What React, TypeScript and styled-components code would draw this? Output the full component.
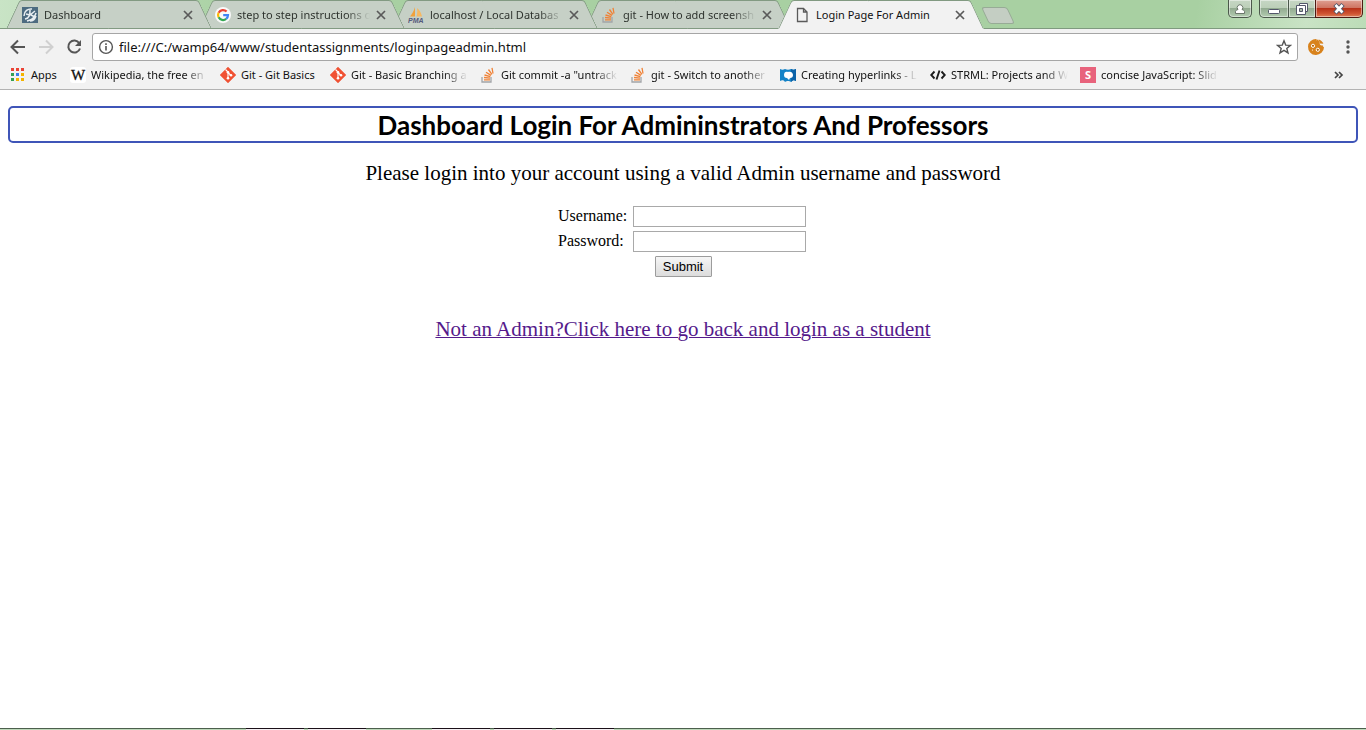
import React from 'react';
import styled, { createGlobalStyle, css } from 'styled-components';

const GlobalStyle = createGlobalStyle`
  *, *::before, *::after { box-sizing: border-box; }
  body { margin: 0; background: #fff; }
  button, input { font: inherit; }
`;

const UI_FONT = "'Segoe UI', 'Noto Sans', sans-serif";

/* ---------- window frame ---------- */

const BrowserWindow = styled.div`
  display: flex;
  flex-direction: column;
  min-height: 100vh;
  overflow: hidden;
  font-family: ${UI_FONT};
  color: #222;
`;

const TitleBar = styled.header`
  display: flex;
  align-items: flex-start;
  height: 29px;
  padding: 0 3px 0 6px;
  background:
    linear-gradient(#7f9a7f, #7f9a7f) left bottom / 100% 1px no-repeat,
    linear-gradient(100deg, #c9e4c6 0, #a8d0a2 240px, #a8d0a2 calc(100% - 170px), #c9e3c5 calc(100% - 60px), #bcdcb7 100%);
`;

const TabList = styled.nav`
  display: flex;
  flex: 0 1 965px;
  min-width: 0;
`;

const Tab = styled.div<{ $active?: boolean; $order: number }>`
  position: relative;
  isolation: isolate;
  z-index: ${p => (p.$active ? 10 : 9 - p.$order)};
  display: flex;
  align-items: center;
  flex: 0 1 205px;
  min-width: 0;
  height: 29px;
  margin-right: -12px;
  padding: 1px 18px 0 16px;

  &::before,
  &::after {
    content: '';
    position: absolute;
    z-index: -1;
    top: 0;
    bottom: 0;
    background: ${p => (p.$active ? '#f2f2f2' : '#c6d0c6')};
    border: 1px solid #829a82;
    transform-origin: bottom;
    ${p => p.$active && css`border-bottom-color: #f2f2f2;`}
  }
  &::before {
    left: 0;
    right: 50%;
    border-right: 0;
    border-top-left-radius: 3px;
    transform: skewX(-25deg);
  }
  &::after {
    left: 50%;
    right: 0;
    border-left: 0;
    border-top-right-radius: 3px;
    transform: skewX(25deg);
  }
`;

const PlainButton = styled.button`
  display: flex;
  align-items: center;
  justify-content: center;
  flex: none;
  padding: 0;
  border: 0;
  background: none;
  color: #5a5a5a;
`;

const TabTitle = styled(PlainButton)<{ $active?: boolean }>`
  flex: 1;
  justify-content: flex-start;
  gap: 6px;
  min-width: 0;
  font-size: 11px;
  line-height: 16px;
  color: ${p => (p.$active ? '#111' : '#2e332e')};
`;

const FadedText = styled.span<{ $width?: number }>`
  flex: ${p => (p.$width ? `0 0 ${p.$width}px` : '1')};
  min-width: 0;
  overflow: hidden;
  white-space: nowrap;
  text-align: left;
  mask-image: linear-gradient(to right, #000 calc(100% - 24px), transparent);
`;

const SolidText = styled(FadedText)`
  mask-image: none;
  overflow: visible;
`;

const CloseButton = styled(PlainButton)`
  width: 10px;
  height: 10px;
  margin-left: 6px;
`;

const NewTabButton = styled.button`
  flex: none;
  width: 26px;
  height: 17px;
  margin: 7px 0 0 14px;
  padding: 0;
  border: 1px solid #97ab96;
  border-radius: 3px;
  background: #c4cec3;
  transform: skewX(25deg);
`;

const WindowButtons = styled.div`
  display: flex;
  flex: none;
  margin-left: auto;
`;

const glass = css`
  border: 1px solid #4b584b;
  border-top: 0;
  box-shadow: inset 0 0 0 1px rgba(255, 255, 255, 0.45);
  background: linear-gradient(#c6d6c4 0, #bccfb9 45%, #93ab91 50%, #b2cbaf 100%);
`;

const ProfileButton = styled(PlainButton)`
  ${glass}
  width: 24px;
  height: 18px;
  margin-right: 7px;
  border-radius: 0 0 5px 5px;
`;

const FrameButton = styled(PlainButton)<{ $kind: 'min' | 'restore' | 'close' }>`
  ${glass}
  height: 18px;
  width: 28px;
  margin-right: -1px;
  ${p => p.$kind === 'min' && css`width: 30px; border-radius: 0 0 0 5px;`}
  ${p => p.$kind === 'close' && css`
    width: 48px;
    margin-right: 0;
    border-color: #4e1a12;
    border-radius: 0 0 5px 0;
    background: linear-gradient(#dfa093 0, #cf7563 45%, #b8321a 50%, #cf5431 80%, #dd8058 100%);
  `}
`;

/* ---------- toolbar and bookmarks ---------- */

const Toolbar = styled.div`
  display: flex;
  align-items: center;
  height: 32px;
  padding: 4px 9px 0 8px;
  background: #f2f2f2;
`;

const ToolButton = styled(PlainButton)`
  width: 18px;
  height: 18px;
  margin-right: 10px;
`;

const AddressBar = styled.div`
  display: flex;
  align-items: center;
  flex: 1;
  min-width: 0;
  height: 28px;
  margin-right: 9px;
  padding: 0 5px;
  border: 1px solid #a6a6a6;
  border-radius: 3px;
  background: #fff;
  color: #555;
`;

const AddressInput = styled.input`
  flex: 1;
  min-width: 0;
  margin: 0 5px;
  padding: 0;
  border: 0;
  outline: 0;
  background: none;
  font-size: 13px;
  line-height: 20px;
  color: #111;
`;

const MenuButton = styled(ToolButton)`
  margin: 0 0 0 14px;
`;

const BookmarkBar = styled.nav`
  display: flex;
  align-items: center;
  gap: 12px;
  height: 29px;
  padding: 0 18px 0 10px;
  border-bottom: 1px solid #b3b3b3;
  background: #f2f2f2;
`;

const Bookmark = styled.a`
  display: flex;
  align-items: center;
  gap: 5px;
  flex: none;
  font-size: 11px;
  line-height: 16px;
  color: #111;
  text-decoration: none;
`;

const OverflowButton = styled(PlainButton)`
  width: 18px;
  height: 16px;
  margin-left: auto;
`;

/* ---------- web page ---------- */

const Page = styled.main`
  display: flex;
  flex-direction: column;
  align-items: center;
  flex: 1;
  padding: 16px 8px;
  background: #fff;
  color: #000;
  font-family: Georgia, 'Liberation Serif', serif;
`;

const Heading = styled.h1`
  align-self: stretch;
  margin: 0 0 18px;
  padding-top: 2px;
  border: 2px solid #3f55b8;
  border-radius: 5px;
  font: bold 26px/31px 'Comic Sans MS', Lato, sans-serif;
  text-align: center;
`;

const Intro = styled.p`
  margin: 0 0 21px;
  font-size: 21px;
  line-height: 24px;
`;

const LoginForm = styled.form`
  display: grid;
  grid-template-columns: 71px 175px;
  gap: 4px;
  align-items: start;
  margin: 0 0 40px;
  font-size: 16px;
  line-height: 19px;
`;

const Field = styled.input`
  width: 173px;
  height: 21px;
  padding: 1px;
  border: 1px solid #a9a9a9;
  background: #fff;
  font: 13px 'Liberation Sans', sans-serif;
`;

const SubmitButton = styled.button`
  grid-column: 1 / -1;
  justify-self: center;
  width: 57px;
  height: 21px;
  padding: 0;
  border: 1px solid #9c9c9c;
  border-radius: 1px;
  background: linear-gradient(#f6f6f6, #dcdcdc);
  font: 13px 'Liberation Sans', sans-serif;
  color: #000;
`;

const StudentLink = styled.a`
  font-size: 21px;
  line-height: 24px;
  color: #551a8b;
  text-decoration-thickness: 1px;
`;

const TaskbarEdge = styled.footer`
  display: flex;
  gap: 4px;
  height: 2px;
  padding-left: 246px;
  background: linear-gradient(#4c5f4c 50%, #bdd8b9 50%);
`;

const TaskbarItem = styled.span<{ $open: boolean }>`
  width: 58px;
  ${p => p.$open && css`background: linear-gradient(#1a1018 50%, #f4eff2 50%);`}
`;

/* ---------- icons ---------- */

const Svg = styled.svg`
  display: block;
  flex: none;
`;

const Icon16 = ({ children }: { children: React.ReactNode }) => (
  <Svg width="16" height="16" viewBox="0 0 16 16" aria-hidden="true">{children}</Svg>
);

const CloseGlyph = () => (
  <Svg width="10" height="10" viewBox="0 0 10 10"><path d="M1 1l8 8M9 1L1 9" stroke="currentColor" strokeWidth="1.7" /></Svg>
);

const DashboardIcon = () => (
  <Icon16>
    <rect width="16" height="16" fill="#4d6b80" />
    <path d="M2 9C2 4 6 1.500 10 2M3 12c5-1 5-5 5-9M5 14c5-1 8-4 9-8M4 7l4 1 5-4M8 14c3 0 5-2 6-5M9 8l4 2" fill="none" stroke="#e8eef1" strokeWidth="1.500" />
  </Icon16>
);

const GoogleIcon = () => (
  <Icon16>
    <circle cx="8" cy="8" r="8" fill="#fafafa" />
    <g fill="none" strokeWidth="2.200">
      <path d="M11.600 4.600A5 5 0 0 0 3.600 5.700" stroke="#ea4335" />
      <path d="M3.600 5.700a5 5 0 0 0 0 4.600" stroke="#fbbc05" />
      <path d="M3.600 10.300a5 5 0 0 0 7.600 1.600" stroke="#34a853" />
      <path d="M11.200 11.900A5 5 0 0 0 13 8.200H8.200" stroke="#4285f4" />
    </g>
  </Icon16>
);

const PmaIcon = () => (
  <Icon16>
    <path d="M7 0v9.500H2C4 7 6 4 7 0z" fill="#f0a13c" />
    <path d="M9 1c3 2 4 5 5 8.500H8.500c1-3 1-6 .5-8.500z" fill="#f7b860" />
    <text x="0" y="16" fontFamily="Liberation Sans, sans-serif" fontSize="7" fontWeight="bold" fontStyle="italic" fill="#55597c">PMA</text>
  </Icon16>
);

const StackIcon = () => (
  <Icon16>
    <path d="M2 10v5h9v-5" fill="none" stroke="#a3a5a8" strokeWidth="1.300" />
    <path d="M4 12.800h6M4 10.500l6 .6M4.500 8l5.800 1.600M6 5.200l5 3.200M8.500 2.500l3.400 4.800M12 .8l1 5.700" stroke="#f08135" strokeWidth="1.300" />
  </Icon16>
);

const FileIcon = () => (
  <Icon16>
    <path d="M3.500 1.500h6l3.500 3.500v9.500H3.500zM9.500 1.500V5H13" fill="none" stroke="#5a5a5a" strokeWidth="1.300" />
  </Icon16>
);

const AppsIcon = () => (
  <Icon16>
    {['#ea4335', '#ea4335', '#ea4335', '#34a053', '#3b7de8', '#f4b400', '#34a053', '#f4b400', '#f4b400'].map((fill, i) => (
      <rect key={i} x={1 + (i % 3) * 5} y={1 + Math.floor(i / 3) * 5} width="3" height="3" fill={fill} />
    ))}
  </Icon16>
);

const WikipediaIcon = () => (
  <Icon16>
    <rect width="16" height="16" rx="3" fill="#fff" />
    <text x="8" y="13" textAnchor="middle" fontFamily="Liberation Serif, serif" fontSize="15" fill="#111" stroke="#111" strokeWidth=".3">W</text>
  </Icon16>
);

const GitIcon = () => (
  <Icon16>
    <path d="M8 0l8 8-8 8-8-8z" fill="#f05133" stroke="#f05133" strokeLinejoin="round" strokeWidth=".4" />
    <path d="M5.500 2.500L8 5v6M8 5.500L11 8.500" stroke="#fff" strokeWidth="1.100" fill="none" />
    <circle cx="8" cy="5.200" r="1.300" fill="#fff" /><circle cx="8" cy="11.200" r="1.300" fill="#fff" /><circle cx="11" cy="8.300" r="1.300" fill="#fff" />
  </Icon16>
);

const HyperlinksIcon = () => (
  <Icon16>
    <path d="M0 2c2 1 3 1 5 0 2 1 4 1 6 0 2 1 3 1 5 0v12c-2-1-3-1-5 1-1-1-2-1-3-1s-2 0-3 1c-1-2-3-2-5-1z" fill="#1583c7" />
    <path d="M11 2c2 1 3 1 5 0v12c-2-1-3-1-5 1z" fill="#0b62a8" />
    <path d="M4 8c0-3 2-4 4-3 2-1 5 0 5 3 0 2-1 3-3 3l-1 2-2-2c-2 0-3-1-3-3z" fill="#fff" />
  </Icon16>
);

const CodeIcon = () => (
  <Icon16>
    <path d="M4.500 4.500L1.200 8l3.300 3.500M11.500 4.500L14.800 8l-3.300 3.500M9.500 3.500l-3 9" fill="none" stroke="#1b1b1b" strokeWidth="1.900" />
  </Icon16>
);

const SlideIcon = () => (
  <Icon16>
    <rect width="16" height="16" fill="#e8637c" />
    <text x="8" y="12" textAnchor="middle" fontFamily="Noto Sans, sans-serif" fontSize="11" fontWeight="bold" fill="#fff">S</text>
  </Icon16>
);

/* ---------- data ---------- */

const tabs = [
  { title: 'Dashboard', icon: <DashboardIcon /> },
  { title: 'step to step instructions o', icon: <GoogleIcon /> },
  { title: 'localhost / Local Databas', icon: <PmaIcon /> },
  { title: 'git - How to add screensh', icon: <StackIcon /> },
  { title: 'Login Page For Admin', icon: <FileIcon />, active: true },
];

const bookmarks = [
  { title: 'Apps', icon: <AppsIcon />, width: 27, whole: true },
  { title: 'Wikipedia, the free en', icon: <WikipediaIcon />, width: 117 },
  { title: 'Git - Git Basics', icon: <GitIcon />, width: 77, whole: true },
  { title: 'Git - Basic Branching a', icon: <GitIcon />, width: 117 },
  { title: 'Git commit -a "untrack', icon: <StackIcon />, width: 117 },
  { title: 'git - Switch to another', icon: <StackIcon />, width: 117 },
  { title: 'Creating hyperlinks - L', icon: <HyperlinksIcon />, width: 117 },
  { title: 'STRML: Projects and W', icon: <CodeIcon />, width: 117 },
  { title: 'concise JavaScript: Slid', icon: <SlideIcon />, width: 117 },
];

const taskbarItems = [true, true, false, true, true, true];

export default function App() {
  return (
    <BrowserWindow>
      <GlobalStyle />
      <TitleBar>
        <TabList aria-label="Tabs">
          {tabs.map((tab, i) => (
            <Tab key={tab.title} $active={tab.active} $order={i}>
              <TabTitle type="button" $active={tab.active}>
                {tab.icon}
                {tab.active ? <SolidText>{tab.title}</SolidText> : <FadedText>{tab.title}</FadedText>}
              </TabTitle>
              <CloseButton type="button" aria-label={`Close ${tab.title}`}><CloseGlyph /></CloseButton>
            </Tab>
          ))}
        </TabList>
        <NewTabButton type="button" aria-label="New tab" />
        <WindowButtons>
          <ProfileButton type="button" aria-label="Profile">
            <Svg width="12" height="12" viewBox="0 0 12 12">
              <path d="M1.500 10.500V8.500c0-1 1-1.500 2.500-2a2.800 2.800 0 1 1 4 0c1.500.5 2.500 1 2.500 2v2z" fill="#fff" stroke="#6c776c" />
            </Svg>
          </ProfileButton>
          <FrameButton type="button" $kind="min" aria-label="Minimize">
            <Svg width="14" height="14" viewBox="0 0 14 14"><rect x="1.500" y="7.500" width="11" height="4" rx="1" fill="#fff" stroke="#53576a" /></Svg>
          </FrameButton>
          <FrameButton type="button" $kind="restore" aria-label="Restore">
            <Svg width="14" height="14" viewBox="0 0 14 14">
              <path d="M4.500 1.500h8v8h-8z" fill="#fff" stroke="#53576a" />
              <path d="M1.500 3.500h9v9h-9z" fill="#fff" stroke="#53576a" />
              <path d="M4.500 6.500h3v3h-3z" fill="#a9bda8" stroke="#53576a" />
            </Svg>
          </FrameButton>
          <FrameButton type="button" $kind="close" aria-label="Close">
            <Svg width="14" height="14" viewBox="0 0 14 14">
              <path d="M3 2.500l8 8.500M11 2.500L3 11" stroke="#53576a" strokeWidth="4.600" />
              <path d="M3.500 3l7 7.500M10.500 3l-7 7.500" stroke="#fff" strokeWidth="2.600" />
            </Svg>
          </FrameButton>
        </WindowButtons>
      </TitleBar>

      <Toolbar>
        <ToolButton type="button" aria-label="Back">
          <Svg width="18" height="18" viewBox="0 0 18 18"><path d="M17 9H4M10 2.500L3.500 9l6.500 6.500" fill="none" stroke="#555" strokeWidth="2" /></Svg>
        </ToolButton>
        <ToolButton type="button" aria-label="Forward">
          <Svg width="18" height="18" viewBox="0 0 18 18"><path d="M3 9h13M10 2.500L16.500 9 10 15.500" fill="none" stroke="#d0d0d0" strokeWidth="2" /></Svg>
        </ToolButton>
        <ToolButton type="button" aria-label="Reload">
          <Svg width="18" height="18" viewBox="0 0 18 18">
            <path d="M15.300 5.200A6 6 0 1 0 16 10.500" fill="none" stroke="#555" strokeWidth="2" />
            <path d="M17 2v6h-6z" fill="#555" />
          </Svg>
        </ToolButton>
        <AddressBar>
          <Icon16>
            <circle cx="8" cy="8" r="6.400" fill="none" stroke="currentColor" strokeWidth="1.400" />
            <path d="M8 7v4.500M8 4.300v1.600" stroke="currentColor" strokeWidth="1.600" />
          </Icon16>
          <AddressInput aria-label="Address" defaultValue="file:///C:/wamp64/www/studentassignments/loginpageadmin.html" />
          <PlainButton type="button" aria-label="Bookmark this page">
            <Icon16>
              <path d="M8 1.800l1.700 4.300 4.700.3-3.600 3 1.200 4.500L8 11.400l-4 2.500 1.200-4.500-3.600-3 4.700-.3z" fill="none" stroke="#555" strokeWidth="1.400" />
            </Icon16>
          </PlainButton>
        </AddressBar>
        <PlainButton type="button" aria-label="Cookies">
          <Svg width="18" height="18" viewBox="0 0 18 18">
            <path d="M9.500 1a8 8 0 1 0 7.500 8.200c-.8-.4-1.300-1-1.500-1.900-1.500.4-2.700-.3-2.900-1.800-1.900 0-3.200-2-3.100-4.500z" fill="#d8821c" />
            <path d="M11.500 1.500c2.200.6 4 2 4.900 4.300L13 5.500z" fill="#d8821c" />
            <path d="M10.500 1.500c1 .5 2 2.300 2.400 4l-2.400 1-2-3z" fill="#d8821c" />
            <circle cx="6" cy="7.800" r="1.600" fill="#b86a10" stroke="#fff" /><circle cx="10.800" cy="11.800" r="1.600" fill="#b86a10" stroke="#fff" />
            <circle cx="5.500" cy="12" r=".6" fill="#fff" />
          </Svg>
        </PlainButton>
        <MenuButton type="button" aria-label="Menu">
          <Svg width="18" height="18" viewBox="0 0 18 18" fill="#555">
            <circle cx="9" cy="4" r="1.700" /><circle cx="9" cy="9" r="1.700" /><circle cx="9" cy="14" r="1.700" />
          </Svg>
        </MenuButton>
      </Toolbar>

      <BookmarkBar aria-label="Bookmarks">
        {bookmarks.map(b => (
          <Bookmark key={b.title} href="#">
            {b.icon}
            {b.whole ? <SolidText $width={b.width}>{b.title}</SolidText> : <FadedText $width={b.width}>{b.title}</FadedText>}
          </Bookmark>
        ))}
        <OverflowButton type="button" aria-label="More bookmarks">
          <Svg width="10" height="8" viewBox="0 0 10 8"><path d="M1 1l3 3-3 3M5 1l3 3-3 3" fill="none" stroke="#444" strokeWidth="1.700" /></Svg>
        </OverflowButton>
      </BookmarkBar>

      <Page>
        <Heading>Dashboard Login For Admininstrators And Professors</Heading>
        <Intro>Please login into your account using a valid Admin username and password</Intro>
        <LoginForm onSubmit={e => e.preventDefault()}>
          <label htmlFor="username">Username:</label>
          <Field id="username" type="text" />
          <label htmlFor="password">Password:</label>
          <Field id="password" type="password" />
          <SubmitButton type="submit">Submit</SubmitButton>
        </LoginForm>
        <StudentLink href="#">Not an Admin?Click here to go back and login as a student</StudentLink>
      </Page>

      <TaskbarEdge>
        {taskbarItems.map((open, i) => <TaskbarItem key={i} $open={open} />)}
      </TaskbarEdge>
    </BrowserWindow>
  );
}
